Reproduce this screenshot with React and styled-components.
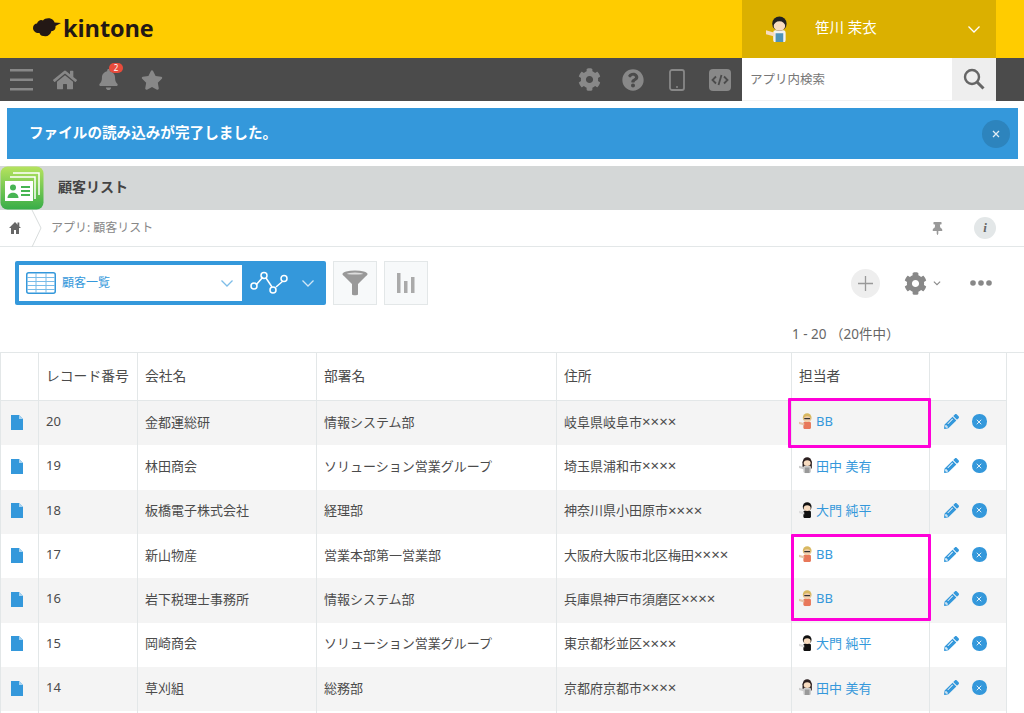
import React from "react";
import styled, { createGlobalStyle } from "styled-components";
import { FaBell, FaCog, FaHome, FaPencilAlt, FaQuestionCircle, FaStar, FaThumbtack } from "react-icons/fa";

const GlobalStyle = createGlobalStyle`
  html, body {
    margin: 0;
    background: #fff;
    font-family: "Noto Sans", "Noto Sans CJK JP", sans-serif;
    color: #4b4b4b;
  }
  * { box-sizing: border-box; }
`;

const Page = styled.div`
  height: 713px;
  overflow: hidden;
`;

const Header = styled.header`
  display: flex;
  justify-content: space-between;
  height: 58px;
  padding-right: 28px;
  background: #ffcc00;
`;

const Logo = styled.div`
  display: flex;
  align-items: center;
  gap: 1px;
  padding: 0 0 2px 32px;
  font-family: "Open Sans", sans-serif;
  font-size: 23.5px;
  font-weight: 700;
  letter-spacing: -0.1px;
  color: #231815;
`;

const UserPanel = styled.div`
  display: flex;
  align-items: center;
  width: 254px;
  padding: 0 15px 0 24px;
  background: #dbb000;
  color: #fff;
  font-size: 14.5px;
`;

const UserName = styled.span`
  flex: 1;
  margin-left: 26px;
  margin-top: -5px;
`;

const NavBar = styled.nav`
  display: flex;
  align-items: stretch;
  height: 43px;
  padding-right: 28px;
  background: #4b4b4b;
  color: #888;
`;

const NavGroup = styled.div`
  display: flex;
  align-items: center;
  flex: ${({ $grow }) => ($grow ? 1 : "none")};
`;

const NavSlot = styled.span`
  position: relative;
  display: flex;
  align-items: center;
  justify-content: center;
  width: 43.5px;
`;

const Badge = styled.span`
  position: absolute;
  top: -6px;
  left: 22px;
  width: 14px;
  height: 10px;
  border-radius: 5px;
  background: #e74c3c;
  color: #fff;
  font-size: 8px;
  line-height: 10px;
  text-align: center;
`;

const SearchBox = styled.div`
  display: flex;
  width: 254px;
  background: #fff;
  border-bottom: 1px solid #f2f2f2;
`;

const SearchText = styled.div`
  flex: 1;
  padding: 11px 0 0 8px;
  font-size: 12.5px;
  color: #777;
`;

const SearchButton = styled.div`
  display: flex;
  align-items: center;
  justify-content: center;
  width: 44px;
  background: #eeeeee;
`;

const Notice = styled.div`
  display: flex;
  align-items: center;
  justify-content: space-between;
  height: 51px;
  margin: 7px 6px 7px 7px;
  padding: 0 8px 0 22px;
  background: #3498db;
  color: #fff;
  font-size: 14.6px;
  font-weight: 700;
`;

const NoticeText = styled.span`
  margin-top: -4px;
`;

const NoticeClose = styled.span`
  display: flex;
  align-items: center;
  justify-content: center;
  width: 28px;
  height: 28px;
  border-radius: 50%;
  background: #2d84bd;
`;

const AppTitle = styled.div`
  display: flex;
  align-items: center;
  height: 44px;
  background: #d4d7d7;
  font-size: 14px;
  font-weight: 700;
  color: #444;
`;

const AppName = styled.span`
  margin: -4px 0 0 14px;
`;

const Breadcrumb = styled.div`
  display: flex;
  align-items: center;
  height: 37px;
  padding-right: 28px;
  border-bottom: 1px solid #e3e7e8;
  font-size: 12px;
  color: #888;
`;

const Crumb = styled.span`
  flex: 1;
  margin: -2px 0 0 7px;
`;

const InfoDot = styled.span`
  display: flex;
  align-items: center;
  justify-content: center;
  width: 22px;
  height: 22px;
  margin-left: 30px;
  border-radius: 50%;
  background: #e3e7e8;
  color: #666;
  font-family: "Liberation Serif", serif;
  font-size: 13px;
  font-style: italic;
  font-weight: 700;
`;

const Toolbar = styled.div`
  display: flex;
  align-items: center;
  height: 44px;
  margin: 14px 0 0;
  padding: 0 32px 0 15px;
  gap: 7px;
`;

const ViewSelect = styled.div`
  display: flex;
  align-items: center;
  width: 311px;
  height: 44px;
  padding: 4px 0 4px 4px;
  border-radius: 2px;
  background: #3498db;
`;

const ViewField = styled.div`
  display: flex;
  align-items: center;
  width: 223px;
  height: 100%;
  padding: 0 8px 0 7px;
  background: #fff;
  color: #3498db;
  font-size: 12px;
`;

const ViewName = styled.span`
  flex: 1;
  margin: -2px 0 0 6px;
`;

const GraphPart = styled.div`
  display: flex;
  align-items: center;
  gap: 13px;
  padding-left: 8px;
`;

const SquareButton = styled.div`
  display: flex;
  align-items: center;
  justify-content: center;
  width: 44px;
  height: 44px;
  border: 1px solid #e3e7e8;
  background: #f7f9fa;
`;

const ToolRight = styled.div`
  display: flex;
  align-items: center;
  margin-left: auto;
`;

const AddButton = styled.div`
  display: flex;
  align-items: center;
  justify-content: center;
  width: 29px;
  height: 29px;
  border-radius: 50%;
  background: #eeeeee;
`;

const SettingGroup = styled.div`
  display: flex;
  align-items: center;
  gap: 6px;
  margin: 0 29px 0 24px;
  color: #888;
`;

const Count = styled.div`
  height: 47px;
  padding: 20px 0 0 792px;
  font-size: 13.5px;
  line-height: 18px;
  color: #666;
`;

const TableWrap = styled.div`
  position: relative;
  border-top: 1px solid #e3e7e8;
`;

const Row = styled.div`
  display: grid;
  grid-template-columns: 38px 99px 179px 240px 235px 138px 78px;
  width: 1007px;
  height: ${({ $height }) => $height || "44.33px"};
  background: ${({ $shaded }) => ($shaded ? "#f4f4f4" : "#fff")};
  font-size: 13px;
`;

const HeadRow = styled(Row)`
  border-bottom: 1px solid #e3e7e8;
  font-size: 13.8px;
`;

const Cell = styled.div`
  display: flex;
  align-items: center;
  padding: 0 0 4px 7px;
  border-left: 1px solid #e3e7e8;
  color: #4b4b4b;
  white-space: nowrap;
  &:last-child {
    border-right: 1px solid #e3e7e8;
  }
`;

const FileCell = styled(Cell)`
  padding: 0 0 2px 10px;
`;

const Marks = styled.span`
  font-size: 15px;
`;

const UserLink = styled.span`
  display: flex;
  align-items: center;
  gap: 3px;
  color: #3498db;
`;

const ActionCell = styled(Cell)`
  gap: 13px;
  padding: 0 0 3px 14px;
  color: #3498db;
`;

const DeleteButton = styled.span`
  display: flex;
  align-items: center;
  justify-content: center;
  width: 14.5px;
  height: 14.5px;
  border-radius: 50%;
  background: #3498db;
`;

const Highlight = styled.div`
  position: absolute;
  left: ${({ $left }) => $left}px;
  top: ${({ $top }) => $top}px;
  width: ${({ $width }) => $width}px;
  height: ${({ $height }) => $height}px;
  border: 3px solid #ff00d8;
  border-radius: 1px;
`;

const Chevron = ({ size = 14, color = "#fff", width = 1.3 }) => (
  <svg width={size} height={size} viewBox="0 0 14 14" fill="none">
    <path d="M1.5 4.5 7 10l5.5-5.5" stroke={color} strokeWidth={width} />
  </svg>
);

const CloudLogo = () => (
  <svg width="30" height="22" viewBox="0 0 30 22">
    <path
      fill="#231815"
      d="M1 11c0-3 2-4.500 4-4.500C6 3.500 9 2 11 3.500 13 .5 19 .5 21 3c1 1 1.500 2 1.500 2.500L29 6l-5.500 3c.5 3-1.500 5-4 5-1 4-4.500 6-7.500 5-2 .5-4-1-4.500-3C4 16.500 1 14 1 11Z"
    />
  </svg>
);

// small user portraits: hair, face, then clothes with a pointing arm
const Person = ({ size = 14, hair = "#222", body = "#4f93b8", shirt = "#fff", skin = "#f8dcc0", arm = skin, glasses = false, long = false }) => (
  <svg width={size} height={(size * 28) / 24} viewBox="0 0 24 28">
    {long && <rect x="6" y="6" width="16" height="15" rx="3" fill={hair} />}
    <rect x="7.500" y="15" width="13" height="12.500" rx="2.500" fill={shirt} />
    <rect x="10" y="18" width="8" height="9.500" fill={body} />
    <path d="M9 17.500 0 15v4l9 2.500Z" fill={arm} />
    <circle cx="14" cy="8" r="7.500" fill={hair} />
    <ellipse cx="14" cy="10.500" rx="6" ry="5" fill={skin} />
    {glasses && <rect x="9" y="8.500" width="10" height="2.200" fill="#333" />}
  </svg>
);

const BurgerIcon = () => (
  <svg width="23" height="22" viewBox="0 0 23 22" fill="#888">
    <rect y="0" width="23" height="2.500" />
    <rect y="9.500" width="23" height="2.500" />
    <rect y="19" width="23" height="2.500" />
  </svg>
);

const MobileIcon = () => (
  <svg width="16" height="22" viewBox="0 0 16 22" fill="none">
    <rect x="1" y="1" width="14" height="20" rx="2" stroke="#888" strokeWidth="1.800" />
    <circle cx="8" cy="18" r="1" fill="#888" />
  </svg>
);

const CodeIcon = () => (
  <svg width="22" height="22" viewBox="0 0 22 22" fill="none">
    <rect width="22" height="22" rx="4" fill="#888" />
    <path d="M7 7.500 3.500 11 7 14.500M15 7.500l3.500 3.500-3.500 3.500M12.500 6l-3 10" stroke="#4b4b4b" strokeWidth="1.800" />
  </svg>
);

const SearchIcon = () => (
  <svg width="22" height="22" viewBox="0 0 22 22" fill="none" stroke="#666">
    <circle cx="9" cy="9" r="7" strokeWidth="2.400" />
    <path d="M14 14l6.500 6.500" strokeWidth="3" />
  </svg>
);

const CloseGlyph = ({ size = 8 }) => (
  <svg width={size} height={size} viewBox="0 0 8 8">
    <path d="M1 1l6 6M7 1 1 7" stroke="#fff" strokeWidth="1.300" opacity="0.85" />
  </svg>
);

const AppIcon = () => (
  <svg width="44" height="44" viewBox="0 0 44 44">
    <defs>
      <linearGradient id="appGreen" x1="0" y1="0" x2="0" y2="1">
        <stop offset="0" stopColor="#b6e35e" />
        <stop offset="1" stopColor="#38ad48" />
      </linearGradient>
    </defs>
    <rect x="0.500" y="0.500" width="43" height="43" rx="7" fill="url(#appGreen)" />
    <path d="M13 7h26v22M10 11h25v22" fill="none" stroke="#fff" strokeWidth="1.500" />
    <rect x="5" y="15" width="28" height="20" fill="#fff" />
    <circle cx="13" cy="21.500" r="3" fill="#47b553" />
    <path d="M7.500 32c0-7 11-7 11 0Z" fill="#47b553" />
    <path d="M21 21h9M21 25h9M21 29h9" stroke="#47b553" strokeWidth="2" />
  </svg>
);

const BreadcrumbHome = () => (
  <svg width="44" height="37" viewBox="0 0 44 37" fill="none">
    <path d="M32 0l9 18-9 19" stroke="#d8dcdc" />
    <path d="M9 18 15 12l6 6h-2v6h-3v-4h-2v4h-3v-6Z" fill="#666" />
    <rect x="17.500" y="12.500" width="1.800" height="3.500" fill="#666" />
  </svg>
);

const TableIcon = () => (
  <svg width="30" height="22" viewBox="0 0 30 22" fill="none">
    <rect x="0.750" y="0.750" width="28.500" height="20.500" rx="2" fill="#fff" stroke="#3498db" strokeWidth="1.500" />
    <path d="M1 5.500h28M1 9.500h28M1 13.500h28M1 17.500h28M10 1v20M20 1v20" stroke="#79bce8" />
  </svg>
);

const GraphIcon = () => (
  <svg width="38" height="24" viewBox="0 0 38 24" fill="none" stroke="#fff" strokeWidth="1.500">
    <path d="M6 14 13 6M16 7l6 9M26 16l7-6" />
    <circle cx="4" cy="15" r="3" />
    <circle cx="14" cy="4.500" r="3" />
    <circle cx="23" cy="19" r="3" />
    <circle cx="34" cy="7.500" r="3" />
  </svg>
);

const FunnelIcon = () => (
  <svg width="26" height="26" viewBox="0 0 26 26">
    <ellipse cx="13" cy="4" rx="12.500" ry="3.500" fill="#999" />
    <ellipse cx="13" cy="3.800" rx="8" ry="1.300" fill="#ddd" />
    <path d="M.5 4.500 10 14v10.500c0 1 6 1 6 0V14l9.500-9.500Z" fill="#999" />
  </svg>
);

const BarsIcon = () => (
  <svg width="18" height="20" viewBox="0 0 18 20" fill="#aaa">
    <rect x="0" y="0" width="3.500" height="20" />
    <rect x="7" y="8" width="3.500" height="12" />
    <rect x="14" y="4" width="3.500" height="16" />
  </svg>
);

const PlusIcon = () => (
  <svg width="15" height="15" viewBox="0 0 15 15">
    <path d="M7.500 0v15M0 7.500h15" stroke="#999" strokeWidth="1.300" />
  </svg>
);

const DotsIcon = () => (
  <svg width="22" height="6" viewBox="0 0 22 6" fill="#888">
    <circle cx="3" cy="3" r="2.800" />
    <circle cx="11" cy="3" r="2.800" />
    <circle cx="19" cy="3" r="2.800" />
  </svg>
);

const FileIcon = () => (
  <svg width="12" height="15" viewBox="0 0 12 15">
    <path d="M0 0h8l4 4v11H0Z" fill="#3498db" />
    <path d="M8 0l4 4H8Z" fill="#a9d4f1" />
  </svg>
);

const avatars = {
  BB: <Person hair="#d8b860" body="#e8785a" shirt="#e8785a" skin="#f3cfae" arm="#e6c4a8" glasses />,
  tanaka: <Person hair="#2c2020" body="#999999" shirt="#cccccc" arm="#cccccc" long />,
  daimon: <Person hair="#111" body="#111" shirt="#111" arm="#dddddd" />,
};

const records = [
  { id: 20, company: "金都運総研", dept: "情報システム部", address: "岐阜県岐阜市", user: "BB", avatar: "BB" },
  { id: 19, company: "林田商会", dept: "ソリューション営業グループ", address: "埼玉県浦和市", user: "田中 美有", avatar: "tanaka" },
  { id: 18, company: "板橋電子株式会社", dept: "経理部", address: "神奈川県小田原市", user: "大門 純平", avatar: "daimon" },
  { id: 17, company: "新山物産", dept: "営業本部第一営業部", address: "大阪府大阪市北区梅田", user: "BB", avatar: "BB" },
  { id: 16, company: "岩下税理士事務所", dept: "情報システム部", address: "兵庫県神戸市須磨区", user: "BB", avatar: "BB" },
  { id: 15, company: "岡崎商会", dept: "ソリューション営業グループ", address: "東京都杉並区", user: "大門 純平", avatar: "daimon" },
  { id: 14, company: "草刈組", dept: "総務部", address: "京都府京都市", user: "田中 美有", avatar: "tanaka" },
];

export default function App() {
  return (
    <Page>
      <GlobalStyle />
      <Header>
        <Logo>
          <CloudLogo />
          <span>kintone</span>
        </Logo>
        <UserPanel>
          <Person size={23} body="#4f93b8" skin="#f8dcc0" shirt="#f2f2f2" />
          <UserName>笹川 茉衣</UserName>
          <Chevron />
        </UserPanel>
      </Header>
      <NavBar>
        <NavGroup $grow>
          <NavSlot>
            <BurgerIcon />
          </NavSlot>
          <NavSlot>
            <FaHome size={24} />
          </NavSlot>
          <NavSlot>
            <FaBell size={21} />
            <Badge>2</Badge>
          </NavSlot>
          <NavSlot>
            <FaStar size={22} />
          </NavSlot>
        </NavGroup>
        <NavGroup>
          <NavSlot>
            <FaCog size={23} />
          </NavSlot>
          <NavSlot>
            <FaQuestionCircle size={22} />
          </NavSlot>
          <NavSlot>
            <MobileIcon />
          </NavSlot>
          <NavSlot>
            <CodeIcon />
          </NavSlot>
        </NavGroup>
        <SearchBox>
          <SearchText>アプリ内検索</SearchText>
          <SearchButton>
            <SearchIcon />
          </SearchButton>
        </SearchBox>
      </NavBar>
      <Notice>
        <NoticeText>ファイルの読み込みが完了しました。</NoticeText>
        <NoticeClose>
          <CloseGlyph />
        </NoticeClose>
      </Notice>
      <AppTitle>
        <AppIcon />
        <AppName>顧客リスト</AppName>
      </AppTitle>
      <Breadcrumb>
        <BreadcrumbHome />
        <Crumb>アプリ: 顧客リスト</Crumb>
        <FaThumbtack size={13} color="#999" />
        <InfoDot>i</InfoDot>
      </Breadcrumb>
      <Toolbar>
        <ViewSelect>
          <ViewField>
            <TableIcon />
            <ViewName>顧客一覧</ViewName>
            <Chevron color="#7dbde8" />
          </ViewField>
          <GraphPart>
            <GraphIcon />
            <Chevron color="#cfe6f6" />
          </GraphPart>
        </ViewSelect>
        <SquareButton>
          <FunnelIcon />
        </SquareButton>
        <SquareButton>
          <BarsIcon />
        </SquareButton>
        <ToolRight>
          <AddButton>
            <PlusIcon />
          </AddButton>
          <SettingGroup>
            <FaCog size={23} />
            <Chevron size={8} color="#888" width={1.8} />
          </SettingGroup>
          <DotsIcon />
        </ToolRight>
      </Toolbar>
      <Count>1 - 20 （20件中）</Count>
      <TableWrap>
        <HeadRow $height="48px">
          <Cell />
          <Cell>レコード番号</Cell>
          <Cell>会社名</Cell>
          <Cell>部署名</Cell>
          <Cell>住所</Cell>
          <Cell>担当者</Cell>
          <Cell />
        </HeadRow>
        {records.map((r, i) => (
          <Row key={r.id} $shaded={i % 2 === 0}>
            <FileCell>
              <FileIcon />
            </FileCell>
            <Cell>{r.id}</Cell>
            <Cell>{r.company}</Cell>
            <Cell>{r.dept}</Cell>
            <Cell>
              {r.address}
              <Marks>××××</Marks>
            </Cell>
            <Cell>
              <UserLink>
                {avatars[r.avatar]}
                {r.user}
              </UserLink>
            </Cell>
            <ActionCell>
              <FaPencilAlt size={15} />
              <DeleteButton>
                <CloseGlyph size={6} />
              </DeleteButton>
            </ActionCell>
          </Row>
        ))}
        <Row $height="3px">
          <Cell />
          <Cell />
          <Cell />
          <Cell />
          <Cell />
          <Cell />
          <Cell />
        </Row>
        <Highlight $left={788} $top={45} $width={143} $height={50} />
        <Highlight $left={791} $top={181} $width={140} $height={87} />
      </TableWrap>
    </Page>
  );
}
